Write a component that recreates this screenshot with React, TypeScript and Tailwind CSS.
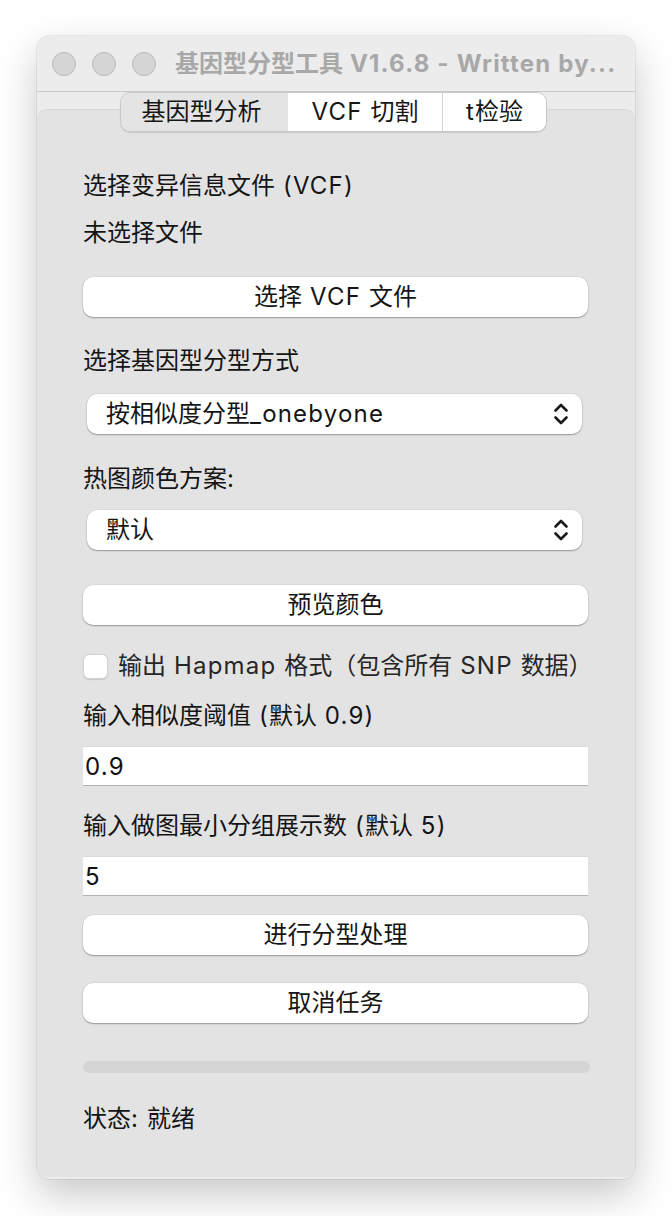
import React from 'react';

const font = { fontFamily: 'Inter, "Noto Sans CJK SC", sans-serif' };

// Latin runs get a bit of tracking so they sit as wide as the system font
function T({ text }: { text: string }) {
  const parts = text.split(/([\u3000-\u303f\u4e00-\u9fff\uff00-\uffef]+)/);
  return (
    <span>
      {parts.map((p, i) =>
        /[\u3000-\u303f\u4e00-\u9fff\uff00-\uffef]/.test(p) ? (
          <span key={i}>{p}</span>
        ) : (
          <span key={i} className="tracking-[0.05em]">{p}</span>
        )
      )}
    </span>
  );
}

function Chevrons() {
  return (
    <svg width="16" height="26" viewBox="0 0 16 26" fill="none" stroke="#1a1a1a" strokeWidth="2.6" strokeLinecap="round" strokeLinejoin="round">
      <path d="M2.5 9.5 L8 4 L13.5 9.5" />
      <path d="M2.5 16.5 L8 22 L13.5 16.5" />
    </svg>
  );
}

function PushButton({ label, className = '' }: { label: string; className?: string }) {
  return (
    <div className={`h-[40px] w-[505px] rounded-[10px] bg-white flex items-center justify-center text-[24px] text-[#151515] whitespace-pre shadow-[0_1px_1.5px_rgba(0,0,0,0.3),0_0_0_0.5px_rgba(0,0,0,0.08)] ${className}`}>
      <T text={label} />
    </div>
  );
}

function Combo({ value, className = '' }: { value: string; className?: string }) {
  return (
    <div className={`ml-[4px] h-[40px] w-[495px] rounded-[10px] bg-white flex items-center justify-between pl-[19px] pr-[13px] text-[24px] text-[#151515] shadow-[0_1px_1.5px_rgba(0,0,0,0.3),0_0_0_0.5px_rgba(0,0,0,0.08)] ${className}`}>
      <T text={value} />
      <Chevrons />
    </div>
  );
}

function Label({ text, className = '' }: { text: string; className?: string }) {
  return (
    <div className={`h-[32px] leading-[34px] text-[24px] text-[#141414] whitespace-nowrap ${className}`}>
      <T text={text} />
    </div>
  );
}

function Field({ value, className = '' }: { value: string; className?: string }) {
  return (
    <div className={`h-[40px] w-[505px] bg-white border-t border-[#dadada] border-b border-b-[#b3b3b3] flex items-center pl-[2px] pt-[2px] text-[24px] text-[#111] ${className}`}>
      <T text={value} />
    </div>
  );
}

export default function App() {
  return (
    <div className="w-[672px] h-[1216px] bg-white pt-[36px] pl-[37px]" style={font}>
      <div className="w-[598px] h-[1143px] rounded-[12px] bg-[#ececec] flex flex-col overflow-hidden shadow-[0_16px_40px_rgba(0,0,0,0.22),0_0_0_0.5px_rgba(0,0,0,0.12)]">
        {/* Title bar */}
        <div className="h-[56px] flex items-center border-b border-[#c8c8c8] shrink-0">
          <div className="flex items-center gap-[16px] ml-[15px]">
            <div className="w-[24px] h-[24px] rounded-full bg-[#d6d6d6] border border-[#b9b9b9]" />
            <div className="w-[24px] h-[24px] rounded-full bg-[#d6d6d6] border border-[#b9b9b9]" />
            <div className="w-[24px] h-[24px] rounded-full bg-[#d6d6d6] border border-[#b9b9b9]" />
          </div>
          <div className="ml-[19px] text-[24px] font-bold text-[#a8a8a8] whitespace-nowrap">
            <T text="基因型分型工具 V1.6.8 - Written by..." />
          </div>
        </div>

        {/* Tabs */}
        <div className="relative z-10 h-[40px] shrink-0 pl-[83px] flex">
          <div className="flex h-[40px] rounded-[10px] overflow-hidden border border-[#c8c8c8] shadow-[0_1px_1px_rgba(0,0,0,0.12)] text-[24px] text-[#161616] whitespace-pre">
            <div className="w-[167px] bg-[#e4e4e4] flex items-center justify-center pr-[6px]">基因型分析</div>
            <div className="w-[154px] bg-white flex items-center justify-center"><T text="VCF 切割" /></div>
            <div className="w-[104px] bg-white flex items-center justify-center border-l border-[#d4d4d4]"><T text="t检验" /></div>
          </div>
        </div>

        {/* Content panel */}
        <div className="-mt-[23px] flex-1 mb-[2px] rounded-[10px] bg-[#e3e3e3] border-t border-[#d8d8d8] pl-[46px] pt-[59px] flex flex-col">
          <Label text="选择变异信息文件 (VCF)" />
          <Label text="未选择文件" className="mt-[15px]" />
          <PushButton label="选择 VCF 文件" className="mt-[29px]" />
          <Label text="选择基因型分型方式" className="mt-[27px]" />
          <Combo value="按相似度分型_onebyone" className="mt-[18px]" />
          <Label text="热图颜色方案:" className="mt-[28px]" />
          <Combo value="默认" className="mt-[16px]" />
          <PushButton label="预览颜色" className="mt-[35px]" />
          <div className="mt-[25px] h-[32px] flex items-center gap-[10px]">
            <div className="w-[25px] h-[25px] rounded-[6px] bg-white border border-[#d2d2d2] shadow-[0_0.5px_1px_rgba(0,0,0,0.12)]" />
            <span className="text-[24px] text-[#262626] whitespace-nowrap">
              <T text="输出 Hapmap 格式（包含所有 SNP 数据）" />
            </span>
          </div>
          <Label text="输入相似度阈值 (默认 0.9)" className="mt-[17px]" />
          <Field value="0.9" className="mt-[15px]" />
          <Label text="输入做图最小分组展示数 (默认 5)" className="mt-[23px]" />
          <Field value="5" className="mt-[15px]" />
          <PushButton label="进行分型处理" className="mt-[19px]" />
          <PushButton label="取消任务" className="mt-[28px]" />
          <div className="mt-[38px] h-[12px] w-[507px] rounded-full bg-[#d5d5d5]" />
          <Label text="状态: 就绪" className="mt-[29px]" />
        </div>
      </div>
    </div>
  );
}
